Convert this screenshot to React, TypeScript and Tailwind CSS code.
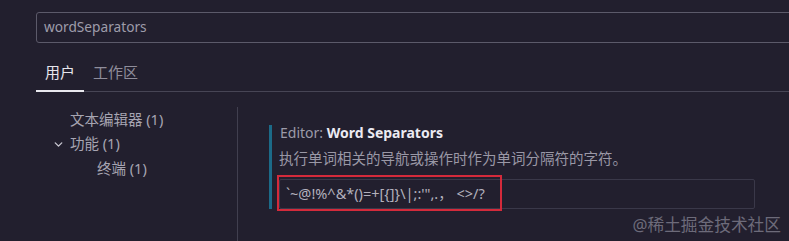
import { ChevronDown } from "lucide-react";

const font = "font-['Noto_Sans','Noto_Sans_CJK_SC',sans-serif]";

export default function App() {
  return (
    <div className={`relative w-[789px] h-[241px] overflow-hidden bg-[#221f2e] ${font}`}>
      <div className="pl-[36px] pt-[12px]">
        {/* search */}
        <div className="flex h-[31px] w-[800px] items-center rounded-[3px] border border-[#5c5a6a] pl-[7px] text-[13.7px] text-[#9e9caa]">
          wordSeparators
        </div>

        {/* tabs */}
        <div className="mt-[17px] flex border-b border-[#474555] text-[15px]">
          <div className="-mb-px border-b-2 border-[#e9e8ee] px-[9px] pt-[2px] pb-[7px] leading-[20px] text-[#e6e5ec]">用户</div>
          <div className="px-[9px] pt-[2px] pb-[9px] leading-[20px] text-[#8f8d9b]">工作区</div>
        </div>
      </div>

      {/* body */}
      <div className="mt-[15px] flex">
        <div className="w-[237px] pl-[36px] pt-[1px] text-[14.5px] text-[#a7a5b2]">
          <div className="flex h-[24px] items-center pl-[34px]">文本编辑器 (1)</div>
          <div className="flex h-[24px] items-center pl-[16px]">
            <ChevronDown size={13} strokeWidth={2.5} className="mr-[5px] text-[#c9c7d1]" />
            功能 (1)
          </div>
          <div className="flex h-[26px] items-center pl-[61px]">终端 (1)</div>
        </div>

        <div className="h-[140px] flex-1 border-l border-[#413f4f] pl-[31px]">
          <div className="mt-[18px] border-l-[3px] border-[#1c6a88] pl-[7px]">
            <div className="pl-[1px] text-[14px] leading-[16px]">
              <span className="text-[#9d9ba9]">Editor: </span>
              <span className="font-bold text-[#eceaf2]">Word Separators</span>
            </div>
            <div className="mt-[7px] text-[14.5px] leading-[20px] text-[#9a98a6]">
              执行单词相关的导航或操作时作为单词分隔符的字符。
            </div>
            <div className="relative mt-[11px] flex h-[30px] w-[476px] items-center rounded-[2px] border border-[#3a3849] pl-[6px] text-[14.5px] text-[#b3b1bd]">
              `~@!%^&amp;*()=+[{"{"}]{"}"}\|;:'",.，  &lt;&gt;/?
              <div className="absolute left-[-3px] top-[-5px] h-[36px] w-[225px] border-2 border-[#d42a3b]" />
            </div>
          </div>
        </div>
      </div>

      <div className="absolute right-[8px] bottom-[6px] text-[16.7px] leading-[20px] text-[#6d6b7a]">@稀土掘金技术社区</div>
    </div>
  );
}
